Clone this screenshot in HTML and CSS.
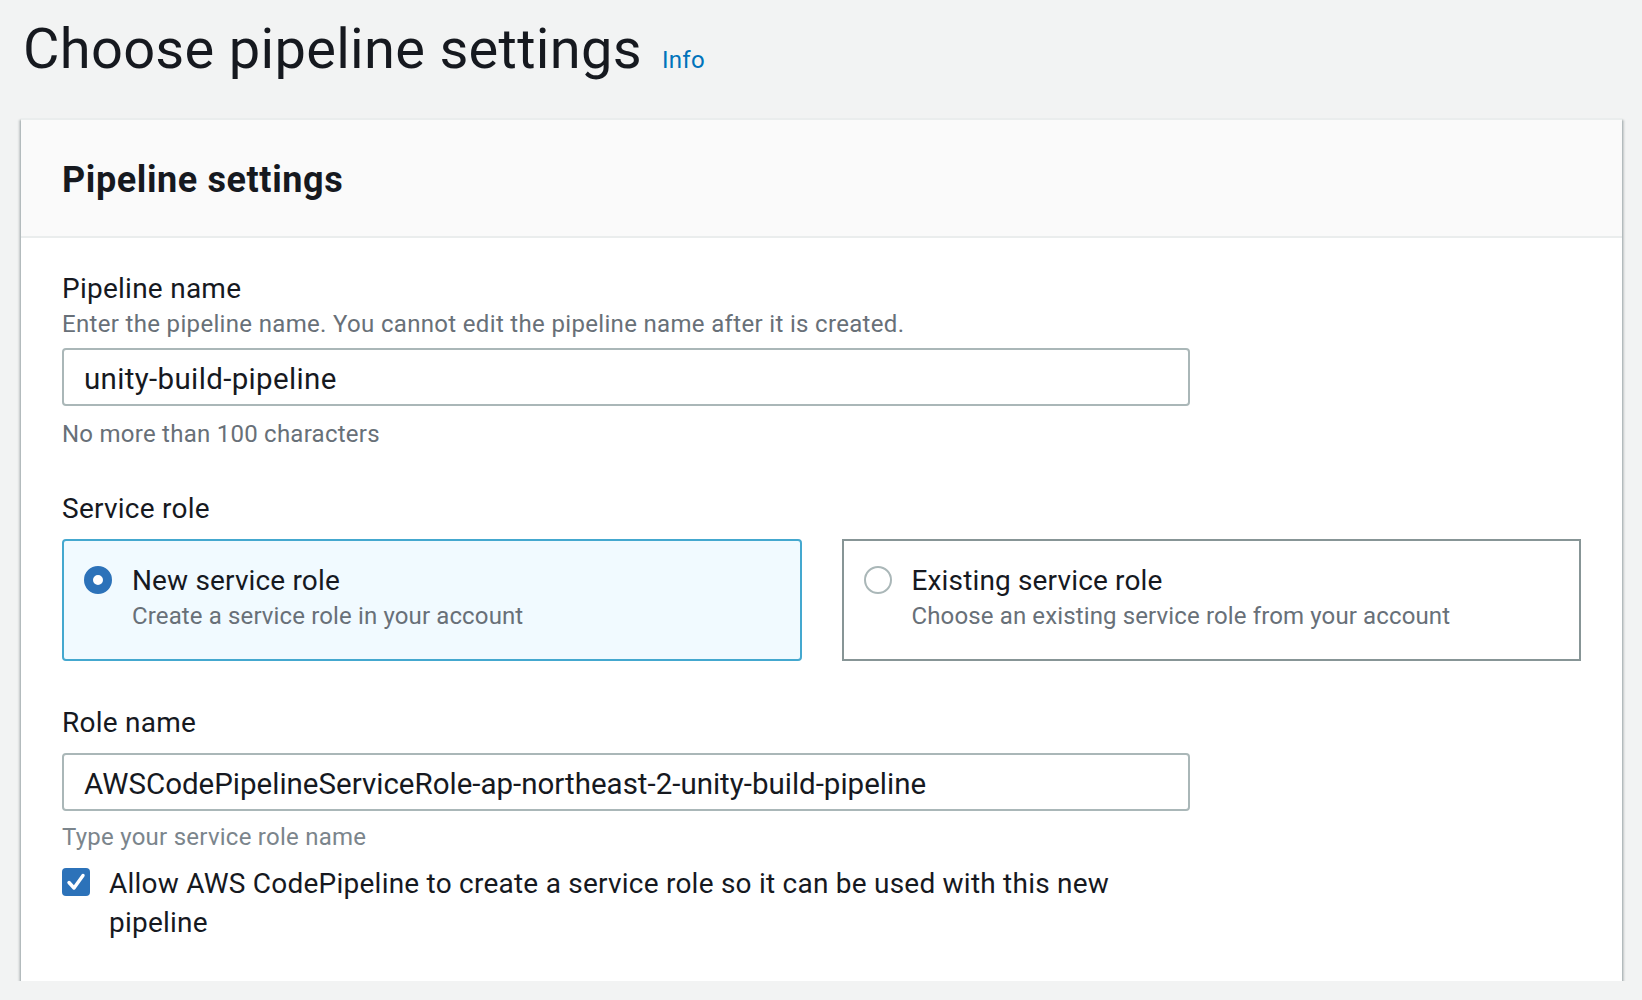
FILE: index.html
```html
<!DOCTYPE html>
<html lang="en">
<head>
<meta charset="utf-8">
<title>Choose pipeline settings</title>
<link rel="stylesheet" href="styles.css">
</head>
<body>
<div class="page">
  <div class="page-header">
    <h1 class="page-title">Choose pipeline settings</h1>
    <a class="info-link" href="#">Info</a>
  </div>

  <section class="container">
    <div class="container-header">
      <h2 class="container-title">Pipeline settings</h2>
    </div>
    <div class="container-body">
      <div class="field">
        <div class="field-label">Pipeline name</div>
        <div class="field-desc">Enter the pipeline name. You cannot edit the pipeline name after it is created.</div>
        <div class="input input-name">unity-build-pipeline</div>
        <div class="field-constraint">No more than 100 characters</div>
      </div>

      <div class="field field-service">
        <div class="field-label">Service role</div>
        <div class="tiles">
          <div class="tile tile-selected">
            <span class="radio radio-checked"></span>
            <div class="tile-text">
              <div class="tile-title">New service role</div>
              <div class="tile-desc">Create a service role in your account</div>
            </div>
          </div>
          <div class="tile">
            <span class="radio"></span>
            <div class="tile-text">
              <div class="tile-title">Existing service role</div>
              <div class="tile-desc">Choose an existing service role from your account</div>
            </div>
          </div>
        </div>
      </div>

      <div class="field field-role">
        <div class="field-label">Role name</div>
        <div class="input input-role">AWSCodePipelineServiceRole-ap-northeast-2-unity-build-pipeline</div>
        <div class="field-hint">Type your service role name</div>
        <div class="checkbox-row">
          <span class="checkbox">
            <svg viewBox="0 0 28 28" width="28" height="28"><path d="M7 14.5 L12 20 L21 7.5" fill="none" stroke="#ffffff" stroke-width="3.4" stroke-linecap="round" stroke-linejoin="round"/></svg>
          </span>
          <span class="checkbox-label">Allow AWS CodePipeline to create a service role so it can be used with this new pipeline</span>
        </div>
      </div>
    </div>
  </section>
</div>
</body>
</html>
```

FILE: styles.css
```css
* {
  box-sizing: border-box;
}

html, body {
  margin: 0;
  padding: 0;
  background: #f2f3f3;
}

body {
  font-family: Roboto, "Liberation Sans", Arial, sans-serif;
  color: #16191f;
}

.page {
  padding: 17px 20px 0 21px;
}

.page-header {
  display: flex;
  align-items: baseline;
}

.page-title {
  margin: 0;
  font-size: 56px;
  line-height: 64px;
  font-weight: 400;
  letter-spacing: 0.3px;
  color: #16191f;
  padding-left: 2px;
}

.info-link {
  margin-left: 20px;
  font-size: 24px;
  letter-spacing: 0.3px;
  color: #0073bb;
  text-decoration: none;
}

.container {
  margin-top: 37px;
  background: #ffffff;
  border-top: 2px solid #eaeded;
  box-shadow: 0 2px 2px 0 rgba(0, 28, 36, 0.35), 2px 2px 2px 0 rgba(0, 28, 36, 0.18), -2px 2px 2px 0 rgba(0, 28, 36, 0.18);
}

.container-header {
  background: #fafafa;
  border-bottom: 2px solid #eaeded;
  padding: 38px 41px 34px 41px;
}

.container-title {
  margin: 0;
  font-size: 36px;
  line-height: 44px;
  font-weight: 700;
  letter-spacing: 0.6px;
}

.container-body {
  padding: 32px 41px 39px 41px;
}

.field-label {
  font-size: 28px;
  line-height: 38px;
  letter-spacing: 0.25px;
}

.field-desc,
.field-constraint,
.field-hint,
.tile-desc {
  font-size: 24px;
  line-height: 32px;
  letter-spacing: 0.25px;
  color: #687078;
}

.field-desc {
  letter-spacing: 0.33px;
}

.tile-desc {
  letter-spacing: 0.13px;
}

.field-hint {
  color: #7b858c;
  margin-top: 10px;
}

.input {
  margin-top: 8px;
  width: 1128px;
  height: 58px;
  border: 2px solid #aab7b8;
  border-radius: 4px;
  padding: 5px 20px 0 20px;
  font-size: 29.5px;
  line-height: 48px;
  color: #16191f;
  background: #ffffff;
  white-space: nowrap;
}

.input-name {
  letter-spacing: 0.35px;
}

.field-constraint {
  margin-top: 12px;
}

.field-service {
  margin-top: 40px;
}

.tiles {
  margin-top: 11px;
  display: grid;
  grid-template-columns: 1fr 1fr;
  gap: 40px;
}

.tile {
  display: flex;
  align-items: flex-start;
  gap: 20px;
  height: 122px;
  padding: 21px 18px 0 20px;
  border: 2px solid #879596;
  background: #ffffff;
}

.tile-selected {
  border-color: #44a8cf;
  background: #f1faff;
  border-radius: 4px;
}

.radio {
  flex: none;
  width: 28px;
  height: 28px;
  margin-top: 4px;
  border-radius: 50%;
  border: 2px solid #aab7b8;
  background: #ffffff;
}

.radio-checked {
  border: 9px solid #2c72b9;
  background: #ffffff;
}

.tile-title {
  font-size: 28px;
  line-height: 38px;
  letter-spacing: 0.15px;
  color: #16191f;
}

.tile-desc {
  margin-top: 0;
}

.field-role {
  margin-top: 43px;
}

.input-role {
  margin-top: 11px;
}

.checkbox-row {
  margin-top: 11px;
  width: 1128px;
  display: flex;
  align-items: flex-start;
  gap: 19px;
}

.checkbox {
  flex: none;
  width: 28px;
  height: 28px;
  margin-top: 4px;
  border-radius: 4px;
  background: #2c72b9;
  display: flex;
}

.checkbox svg {
  display: block;
}

.checkbox-label {
  font-size: 28px;
  line-height: 39px;
  letter-spacing: 0.23px;
  color: #16191f;
}
```
